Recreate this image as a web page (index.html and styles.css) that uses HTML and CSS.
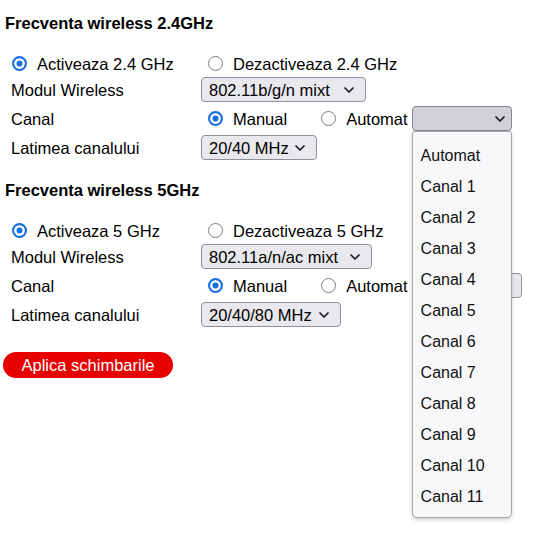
FILE: index.html
```html
<!DOCTYPE html>
<html lang="ro">
<head>
<meta charset="utf-8">
<title>Setari wireless</title>
<link rel="stylesheet" href="styles.css">
</head>
<body>
<main class="page">
  <section class="band">
    <h2 class="band-title">Frecventa wireless 2.4GHz</h2>
    <div class="form-grid">
      <label class="choice first"><input type="radio" name="en24" checked><span>Activeaza 2.4 GHz</span></label>
      <label class="choice"><input type="radio" name="en24"><span>Dezactiveaza 2.4 GHz</span></label>

      <span class="field-label">Modul Wireless</span>
      <div class="control">
        <div class="select w-mode24"><span>802.11b/g/n mixt</span><svg class="chev" viewBox="0 0 10 6" width="10" height="6"><path d="M1 1l4 4 4-4"/></svg></div>
      </div>

      <span class="field-label">Canal</span>
      <div class="control">
        <label class="choice spaced"><input type="radio" name="ch24" checked><span>Manual</span></label>
        <label class="choice"><input type="radio" name="ch24"><span>Automat</span></label>
        <div class="select-wrap">
          <div class="select open w-chan24"><span></span><svg class="chev" viewBox="0 0 10 6" width="10" height="6"><path d="M1 1l4 4 4-4"/></svg></div>
          <ul class="listbox">
            <li>Automat</li>
            <li>Canal 1</li>
            <li>Canal 2</li>
            <li>Canal 3</li>
            <li>Canal 4</li>
            <li>Canal 5</li>
            <li>Canal 6</li>
            <li>Canal 7</li>
            <li>Canal 8</li>
            <li>Canal 9</li>
            <li>Canal 10</li>
            <li>Canal 11</li>
          </ul>
        </div>
      </div>

      <span class="field-label">Latimea canalului</span>
      <div class="control">
        <div class="select w-width24"><span>20/40 MHz</span><svg class="chev" viewBox="0 0 10 6" width="10" height="6"><path d="M1 1l4 4 4-4"/></svg></div>
      </div>
    </div>
  </section>

  <section class="band">
    <h2 class="band-title">Frecventa wireless 5GHz</h2>
    <div class="form-grid">
      <label class="choice first"><input type="radio" name="en5" checked><span>Activeaza 5 GHz</span></label>
      <label class="choice"><input type="radio" name="en5"><span>Dezactiveaza 5 GHz</span></label>

      <span class="field-label">Modul Wireless</span>
      <div class="control">
        <div class="select w-mode5"><span>802.11a/n/ac mixt</span><svg class="chev" viewBox="0 0 10 6" width="10" height="6"><path d="M1 1l4 4 4-4"/></svg></div>
      </div>

      <span class="field-label">Canal</span>
      <div class="control">
        <label class="choice spaced"><input type="radio" name="ch5" checked><span>Manual</span></label>
        <label class="choice"><input type="radio" name="ch5"><span>Automat</span></label>
        <div class="select-wrap">
          <div class="select w-chan5"><span></span><svg class="chev" viewBox="0 0 10 6" width="10" height="6"><path d="M1 1l4 4 4-4"/></svg></div>
        </div>
      </div>

      <span class="field-label">Latimea canalului</span>
      <div class="control">
        <div class="select w-width5"><span>20/40/80 MHz</span><svg class="chev" viewBox="0 0 10 6" width="10" height="6"><path d="M1 1l4 4 4-4"/></svg></div>
      </div>
    </div>
  </section>

  <button class="apply" type="button">Aplica schimbarile</button>
</main>
</body>
</html>
```
FILE: styles.css
```css
* { box-sizing: border-box; }

html, body {
  margin: 0;
  background: #ffffff;
}

body {
  min-height: 100vh;
  font-family: "Liberation Sans", Arial, sans-serif;
  font-size: 16.5px;
  color: #000;
}

.page {
  min-height: 100vh;
  padding: 13px 0 0 0;
  display: flex;
  flex-direction: column;
  align-items: flex-start;
}

.band {
  display: flex;
  flex-direction: column;
  width: 100%;
}

.band + .band {
  margin-top: 18px;
}

.band-title {
  margin: 0;
  padding-left: 5px;
  font-size: 16.5px;
  font-weight: bold;
  line-height: 20px;
}

.form-grid {
  margin-top: 19px;
  padding-left: 11px;
  display: grid;
  grid-template-columns: 190px 1fr;
  grid-template-rows: 23px 29px 29px 29px;
  align-items: center;
}

.field-label {
  line-height: 20px;
}

.control {
  display: flex;
  align-items: center;
}

.choice {
  display: inline-flex;
  align-items: center;
  line-height: 20px;
  padding-left: 7px;
}

.choice.first {
  padding-left: 1px;
}

.control .choice + .choice {
  padding-left: 0;
}

.choice.spaced {
  margin-right: 34px;
}

.choice input {
  appearance: none;
  -webkit-appearance: none;
  width: 15px;
  height: 15px;
  margin: 0 10px 0 0;
  border-radius: 50%;
  border: 1.5px solid #7c7c80;
  background: #fff;
  flex: none;
}

.choice input:checked {
  border: 2px solid #1670e4;
  background: #1670e4;
  box-shadow: inset 0 0 0 2.5px #fff;
}

.select-wrap {
  position: relative;
  margin-left: 4px;
}

.select {
  height: 25px;
  display: flex;
  align-items: center;
  justify-content: space-between;
  padding: 0 11px 0 7px;
  border: 1px solid #8f8f9d;
  border-radius: 4px;
  background: #e9e9ed;
  line-height: 20px;
  white-space: nowrap;
}

.select.open {
  background: #d1d1d7;
  border-color: #85858f;
  padding-right: 6px;
}

.chev {
  flex: none;
}

.chev path {
  fill: none;
  stroke: #1b1b1b;
  stroke-width: 1.7;
  stroke-linecap: round;
  stroke-linejoin: round;
}

.w-mode24 { width: 165px; }
.w-chan24 { width: 100px; }
.w-width24 { width: 116px; }
.w-mode5 { width: 171px; }
.w-chan5 { width: 110px; }
.w-width5 { width: 140px; }

.listbox {
  position: absolute;
  top: 100%;
  left: 0;
  z-index: 10;
  width: 100px;
  margin: 0;
  padding: 8px 0 5px 0;
  list-style: none;
  background: #f8f8fa;
  border: 1px solid #a3a3a8;
  border-radius: 3px 3px 5px 5px;
  box-shadow: 0 2px 4px rgba(0, 0, 0, 0.18);
  font-size: 16px;
  color: #111;
}

.listbox li {
  height: 31px;
  line-height: 31px;
  padding-left: 8px;
}

.apply {
  margin: 23px 0 0 3px;
  height: 26px;
  width: 170px;
  padding: 0;
  border: none;
  border-radius: 13px;
  background: #e60000;
  color: #fff;
  font-family: "Liberation Sans", Arial, sans-serif;
  font-size: 16.5px;
  line-height: 26px;
  text-align: center;
}
```
